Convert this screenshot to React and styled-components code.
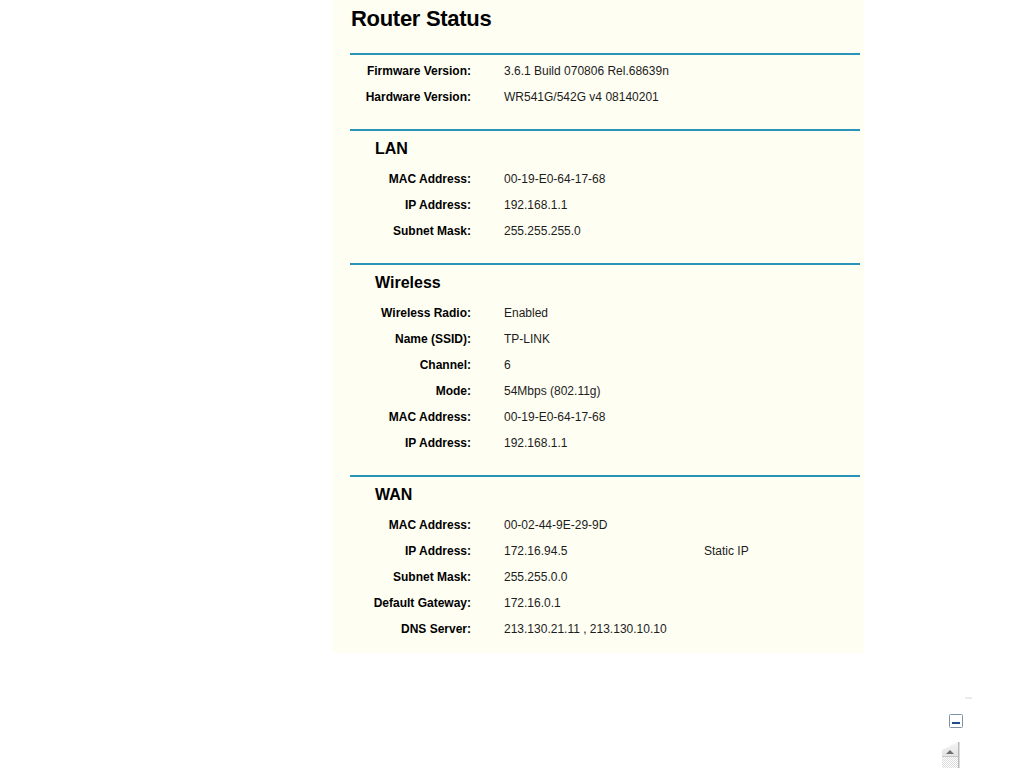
import React from "react";
import styled, { createGlobalStyle } from "styled-components";

const Global = createGlobalStyle`
  html, body { margin: 0; padding: 0; background: #ffffff; height: 100%; }
  body { font-family: "Liberation Sans", Arial, sans-serif; overflow: hidden; }
  #root { position: relative; min-height: 768px; }
`;

const Page = styled.div`
  padding-left: 333px;
`;

const Panel = styled.div`
  width: 531px;
  background: #fefef3;
  padding-bottom: 12px;
`;

const Title = styled.h1`
  margin: 0 0 21px 0;
  padding: 6px 0 0 18px;
  font-size: 22px;
  line-height: 26px;
  font-weight: bold;
  color: #000;
  letter-spacing: -0.3px;
`;

const Divider = styled.div`
  margin-left: 17px;
  width: 510px;
  height: 2px;
  background: #2a93b8;
`;

const Section = styled.section`
  padding-bottom: ${(p) => (p.$last ? 0 : 20)}px;
  padding-top: ${(p) => (p.$plain ? 2 : 0)}px;
`;

const Heading = styled.h2`
  margin: 0;
  padding: 1px 0 0 42px;
  height: 33px;
  line-height: 33px;
  font-size: 16px;
  font-weight: bold;
  color: #000;
`;

const Row = styled.div`
  display: grid;
  grid-template-columns: 138px 167px auto;
  column-gap: 33px;
  height: 26px;
  line-height: 28px;
  font-size: 12px;
`;

const Label = styled.span`
  text-align: right;
  font-weight: bold;
  color: #000;
  white-space: nowrap;
`;

const Value = styled.span`
  color: #1c1c1c;
  white-space: nowrap;
`;

const Overlay = styled.svg`
  position: absolute;
  left: 936px;
  top: 690px;
`;

const sections = [
  {
    plain: true,
    rows: [
      ["Firmware Version:", "3.6.1 Build 070806 Rel.68639n"],
      ["Hardware Version:", "WR541G/542G v4 08140201"],
    ],
  },
  {
    title: "LAN",
    rows: [
      ["MAC Address:", "00-19-E0-64-17-68"],
      ["IP Address:", "192.168.1.1"],
      ["Subnet Mask:", "255.255.255.0"],
    ],
  },
  {
    title: "Wireless",
    rows: [
      ["Wireless Radio:", "Enabled"],
      ["Name (SSID):", "TP-LINK"],
      ["Channel:", "6"],
      ["Mode:", "54Mbps (802.11g)"],
      ["MAC Address:", "00-19-E0-64-17-68"],
      ["IP Address:", "192.168.1.1"],
    ],
  },
  {
    title: "WAN",
    last: true,
    rows: [
      ["MAC Address:", "00-02-44-9E-29-9D"],
      ["IP Address:", "172.16.94.5", "Static IP"],
      ["Subnet Mask:", "255.255.0.0"],
      ["Default Gateway:", "172.16.0.1"],
      ["DNS Server:", "213.130.21.11 , 213.130.10.10"],
    ],
  },
];

export default function App() {
  return (
    <>
      <Global />
      <Page>
        <Panel>
          <Title>Router Status</Title>
          {sections.map((s, i) => (
            <React.Fragment key={i}>
              <Divider />
              <Section $plain={s.plain} $last={s.last}>
                {s.title && <Heading>{s.title}</Heading>}
                {s.rows.map((r, j) => (
                  <Row key={j}>
                    <Label>{r[0]}</Label>
                    <Value>{r[1]}</Value>
                    {r[2] && <Value>{r[2]}</Value>}
                  </Row>
                ))}
              </Section>
            </React.Fragment>
          ))}
        </Panel>
      </Page>
      <Overlay width="44" height="78" viewBox="0 0 44 78">
        <defs>
          <pattern id="chk" width="2" height="2" patternUnits="userSpaceOnUse">
            <rect width="2" height="2" fill="#ffffff" />
            <rect width="1" height="1" fill="#dcdcdc" />
            <rect x="1" y="1" width="1" height="1" fill="#dcdcdc" />
          </pattern>
          <linearGradient id="btn" x1="0" y1="0" x2="0" y2="1">
            <stop offset="0" stopColor="#f4f4f4" />
            <stop offset="1" stopColor="#e2e2e2" />
          </linearGradient>
        </defs>
        <rect x="29" y="7.5" width="7" height="1" fill="#d4d4e0" />
        <rect x="13.5" y="24.5" width="13" height="13" rx="1" fill="#ffffff" stroke="#7d92a6" strokeWidth="1" />
        <rect x="16" y="32" width="8" height="2" fill="#1f4e8c" />
        <path d="M6 67 L6 60 Q14 56 22 52 L22 67 Z" fill="url(#btn)" />
        <rect x="6" y="67" width="16" height="11" fill="url(#chk)" />
        <rect x="6" y="66" width="16" height="1" fill="#c8c8c8" />
        <rect x="22" y="52" width="1.5" height="26" fill="#b8b8b8" />
        <path d="M10 64 L14 60 L18 64 Z" fill="#707070" />
      </Overlay>
    </>
  );
}
